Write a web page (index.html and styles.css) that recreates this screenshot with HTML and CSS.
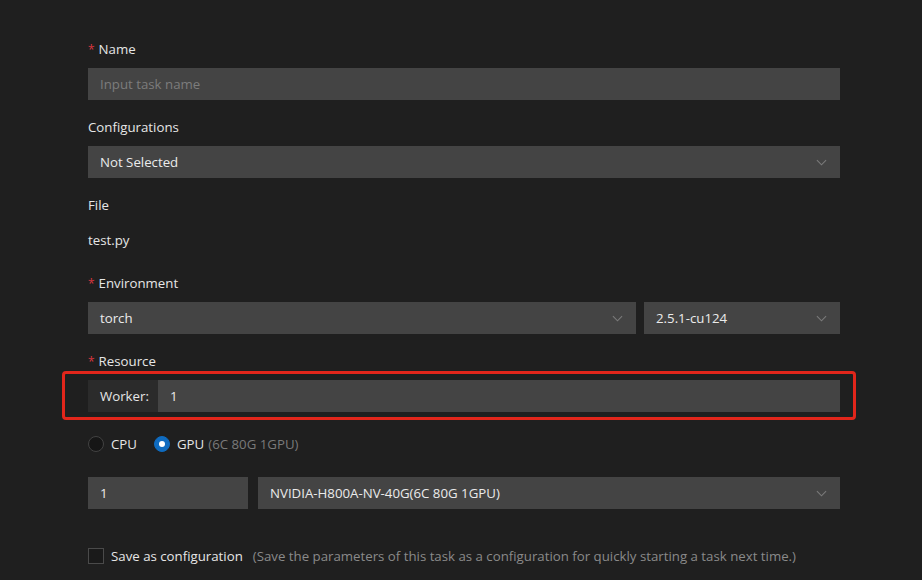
FILE: index.html
```html
<!DOCTYPE html>
<html>
<head>
<meta charset="utf-8">
<link rel="stylesheet" href="styles.css">
</head>
<body>
<div class="form">
  <div class="label first"><span class="req">*</span>Name</div>
  <div class="input placeholder">Input task name</div>

  <div class="label">Configurations</div>
  <div class="input select"><span>Not Selected</span><svg class="chev" viewBox="0 0 12 7"><path d="M1 1l5 5 5-5"/></svg></div>

  <div class="label">File</div>
  <div class="value">test.py</div>

  <div class="label env"><span class="req">*</span>Environment</div>
  <div class="row">
    <div class="input select grow"><span>torch</span><svg class="chev" viewBox="0 0 12 7"><path d="M1 1l5 5 5-5"/></svg></div>
    <div class="input select version"><span>2.5.1-cu124</span><svg class="chev" viewBox="0 0 12 7"><path d="M1 1l5 5 5-5"/></svg></div>
  </div>

  <div class="label"><span class="req">*</span>Resource</div>
  <div class="highlight">
    <div class="group">
      <div class="addon">Worker:</div>
      <div class="input grow">1</div>
    </div>
  </div>

  <div class="radios">
    <label class="radio"><span class="dot"></span>CPU</label>
    <label class="radio checked"><span class="dot"></span>GPU <span class="muted">(6C 80G 1GPU)</span></label>
  </div>

  <div class="row gpu">
    <div class="input count">1</div>
    <div class="input select grow"><span>NVIDIA-H800A-NV-40G(6C 80G 1GPU)</span><svg class="chev" viewBox="0 0 12 7"><path d="M1 1l5 5 5-5"/></svg></div>
  </div>

  <label class="check"><span class="box"></span>Save as configuration <span class="hint">(Save the parameters of this task as a configuration for quickly starting a task next time.)</span></label>
</div>
</body>
</html>
```
FILE: styles.css
```css
html, body {
  margin: 0;
  padding: 0;
  background: #1f1f1f;
}
body {
  font-family: "Open Sans", "Noto Sans", sans-serif;
  font-size: 13.25px;
  color: #e6e6e6;
  overflow: hidden;
}
.form {
  width: 752px;
  margin-left: 88px;
  padding-top: 38px;
}
.label {
  height: 22px;
  line-height: 22px;
  margin-top: 16px;
  margin-bottom: 8px;
}
.label.first { margin-top: 0; }
.label.env { margin-top: 21px; }
.req {
  color: #d9363e;
  margin-right: 4px;
  font-size: 12px;
}
.value {
  height: 22px;
  line-height: 22px;
  margin-top: 13px;
}
.input {
  height: 32px;
  line-height: 32px;
  background: #444444;
  padding: 0 12px;
  box-sizing: border-box;
  color: #ebebeb;
}
.placeholder { color: #7c7c7c; }
.select {
  display: flex;
  align-items: center;
  justify-content: space-between;
}
.chev {
  width: 11px;
  height: 7px;
  fill: none;
  stroke: #7a7a7a;
  stroke-width: 1.2;
  margin-right: 1px;
}
.row {
  display: flex;
  gap: 8px;
}
.grow { flex: 1; }
.version { width: 196px; }
.highlight {
  margin: -9px -16px 0 -26px;
  padding: 6px 13px 5px 23px;
  border: 3px solid #e2261b;
  border-radius: 4px;
}
.group { display: flex; }
.addon {
  width: 70px;
  height: 32px;
  line-height: 32px;
  background: #2b2b2b;
  box-sizing: border-box;
  padding-left: 12px;
  color: #e6e6e6;
}
.radios {
  display: flex;
  gap: 17px;
  height: 22px;
  align-items: center;
  margin-top: 13px;
}
.radio {
  display: flex;
  align-items: center;
  gap: 7px;
}
.dot {
  width: 16px;
  height: 16px;
  border-radius: 50%;
  box-sizing: border-box;
  border: 1px solid #424242;
  background: #161616;
}
.radio.checked .dot {
  background: #0f6bbf;
  border-color: #0f6bbf;
  position: relative;
}
.radio.checked .dot::after {
  content: "";
  position: absolute;
  left: 4px;
  top: 4px;
  width: 6px;
  height: 6px;
  border-radius: 50%;
  background: #ffffff;
}
.muted { color: #7a7a7a; margin-left: -3px; }
.gpu { margin-top: 22px; gap: 10px; }
.count { width: 160px; }
.check {
  display: flex;
  align-items: center;
  height: 22px;
  margin-top: 36px;
  white-space: nowrap;
}
.box {
  width: 16px;
  height: 16px;
  box-sizing: border-box;
  border: 1px solid #4a4a4a;
  background: #1a1a1a;
  margin-right: 7px;
}
.hint {
  color: #8a8a8a;
  margin-left: 10px;
}
```
